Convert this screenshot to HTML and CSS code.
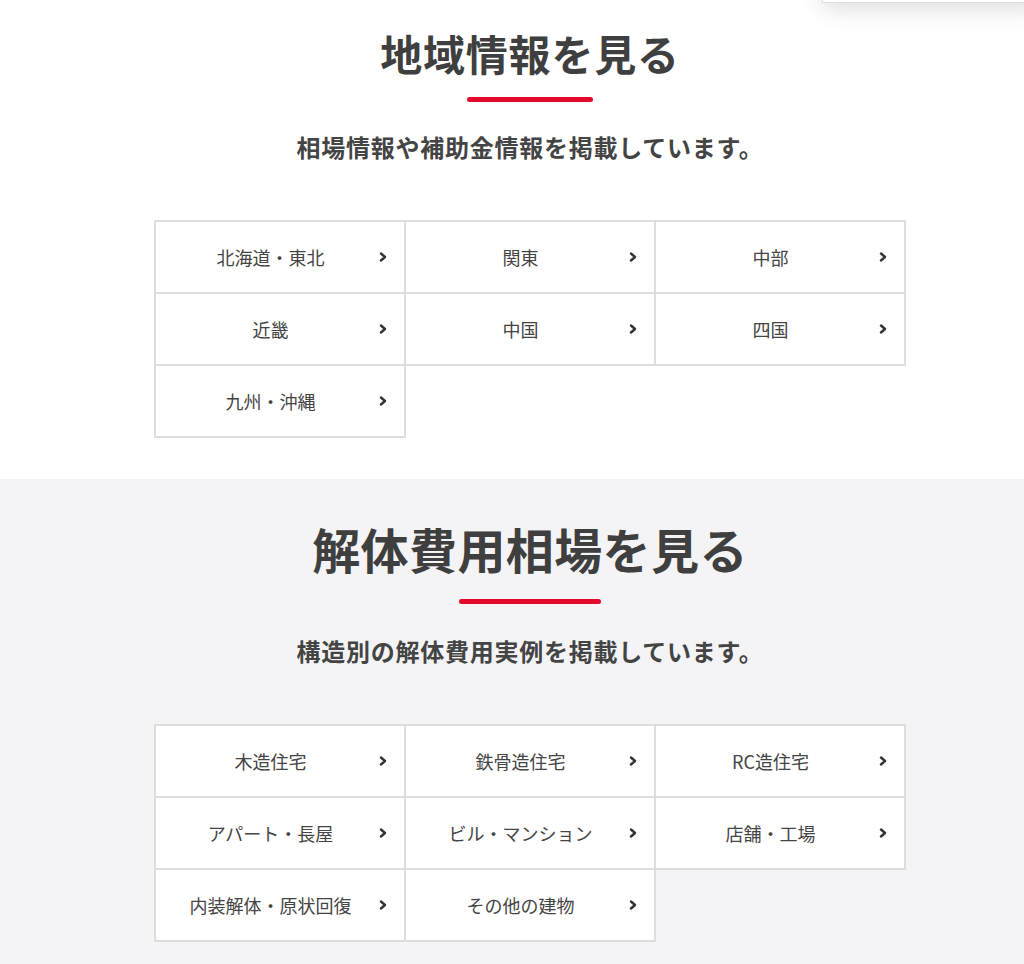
FILE: index.html
```html
<!DOCTYPE html>
<html lang="ja">
<head>
  <meta charset="UTF-8" />
  <meta name="viewport" content="width=device-width, initial-scale=1.0"/>
  <title>地域情報・解体費用相場</title>
  <link rel="stylesheet" href="styles.css">
</head>
<body>
  <div class="floating-panel"></div>

  <section class="block block-area">
    <div class="inner">
      <h2 class="block-title">地域情報を見る</h2>
      <div class="title-bar"></div>
      <p class="block-lead">相場情報や補助金情報を掲載しています。</p>

      <ul class="link-grid">
        <li><a href="#"><span>北海道・東北</span><svg class="chev" viewBox="0 0 8 10"><polyline points="2,1.5 6,5 2,8.5"/></svg></a></li>
        <li><a href="#"><span>関東</span><svg class="chev" viewBox="0 0 8 10"><polyline points="2,1.5 6,5 2,8.5"/></svg></a></li>
        <li><a href="#"><span>中部</span><svg class="chev" viewBox="0 0 8 10"><polyline points="2,1.5 6,5 2,8.5"/></svg></a></li>
        <li><a href="#"><span>近畿</span><svg class="chev" viewBox="0 0 8 10"><polyline points="2,1.5 6,5 2,8.5"/></svg></a></li>
        <li><a href="#"><span>中国</span><svg class="chev" viewBox="0 0 8 10"><polyline points="2,1.5 6,5 2,8.5"/></svg></a></li>
        <li><a href="#"><span>四国</span><svg class="chev" viewBox="0 0 8 10"><polyline points="2,1.5 6,5 2,8.5"/></svg></a></li>
        <li><a href="#"><span>九州・沖縄</span><svg class="chev" viewBox="0 0 8 10"><polyline points="2,1.5 6,5 2,8.5"/></svg></a></li>
      </ul>
    </div>
  </section>

  <section class="block block-price">
    <div class="inner">
      <h2 class="block-title big">解体費用相場を見る</h2>
      <div class="title-bar wide"></div>
      <p class="block-lead">構造別の解体費用実例を掲載しています。</p>

      <ul class="link-grid">
        <li><a href="#"><span>木造住宅</span><svg class="chev" viewBox="0 0 8 10"><polyline points="2,1.5 6,5 2,8.5"/></svg></a></li>
        <li><a href="#"><span>鉄骨造住宅</span><svg class="chev" viewBox="0 0 8 10"><polyline points="2,1.5 6,5 2,8.5"/></svg></a></li>
        <li><a href="#"><span>RC造住宅</span><svg class="chev" viewBox="0 0 8 10"><polyline points="2,1.5 6,5 2,8.5"/></svg></a></li>
        <li><a href="#"><span>アパート・長屋</span><svg class="chev" viewBox="0 0 8 10"><polyline points="2,1.5 6,5 2,8.5"/></svg></a></li>
        <li><a href="#"><span>ビル・マンション</span><svg class="chev" viewBox="0 0 8 10"><polyline points="2,1.5 6,5 2,8.5"/></svg></a></li>
        <li><a href="#"><span>店舗・工場</span><svg class="chev" viewBox="0 0 8 10"><polyline points="2,1.5 6,5 2,8.5"/></svg></a></li>
        <li><a href="#"><span>内装解体・原状回復</span><svg class="chev" viewBox="0 0 8 10"><polyline points="2,1.5 6,5 2,8.5"/></svg></a></li>
        <li><a href="#"><span>その他の建物</span><svg class="chev" viewBox="0 0 8 10"><polyline points="2,1.5 6,5 2,8.5"/></svg></a></li>
      </ul>
    </div>
  </section>
</body>
</html>
```

FILE: styles.css
```css
body {
  margin: 0;
  font-family: "Noto Sans CJK JP", "Noto Sans", sans-serif;
  color: #444;
  background-color: #fff;
}

.floating-panel {
  position: absolute;
  top: -100px;
  left: 822px;
  width: 220px;
  height: 101px;
  background: #fff;
  border: 1px solid #ddd;
  box-shadow: 0 6px 22px rgba(0, 0, 0, 0.13);
  z-index: 10;
}

.block {
  padding: 28px 0 41px;
}

.block-price {
  background-color: #f4f4f6;
  padding-top: 40px;
  padding-bottom: 40px;
}

.inner {
  width: 752px;
  margin-left: 154px;
  display: flex;
  flex-direction: column;
  align-items: center;
}

.block-title {
  margin: 0;
  font-size: 42px;
  line-height: 50px;
  font-weight: 700;
  letter-spacing: 0.8px;
  color: #3f3f3f;
}

.block-title.big {
  font-size: 48px;
  line-height: 58px;
  letter-spacing: 0.4px;
}

.title-bar {
  width: 126px;
  height: 5px;
  border-radius: 3px;
  background-color: #e5092d;
  margin-top: 19px;
}

.title-bar.wide {
  width: 142px;
  margin-top: 22px;
}

.block-lead {
  margin: 27px 0 0;
  font-size: 24px;
  line-height: 36px;
  font-weight: 700;
  letter-spacing: 0.75px;
  color: #444;
}

.block-price .block-lead {
  margin-top: 29px;
}

.link-grid {
  list-style: none;
  margin: 55px 0 0;
  padding: 2px 0 0 2px;
  width: 752px;
  box-sizing: border-box;
  display: grid;
  grid-template-columns: repeat(3, 250px);
}

.block-price .link-grid {
  margin-top: 55px;
}

.link-grid li {
  margin: -2px 0 0 -2px;
  border: 2px solid #ddd;
  height: 70px;
  background: #fff;
}

.link-grid a {
  display: flex;
  align-items: center;
  height: 100%;
  padding: 0 17px 0 6px;
  color: #444;
  text-decoration: none;
  font-size: 18px;
}

.link-grid a span {
  flex: 1;
  text-align: center;
}

.chev {
  width: 8px;
  height: 10px;
  fill: none;
  stroke: #333;
  stroke-width: 2.4;
  stroke-linecap: round;
  stroke-linejoin: round;
}
```
